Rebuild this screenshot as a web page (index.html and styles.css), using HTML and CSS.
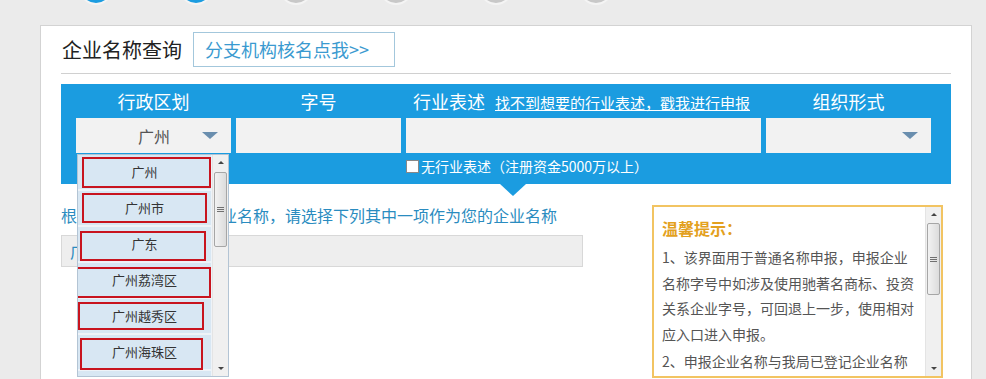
FILE: index.html
```html
<html>
	<head>
		<meta charset="UTF-8" />
		<meta name="viewport" content="width=device-width, initial-scale=1.0" />
		<title>企业名称查询</title>
		<link rel="stylesheet" href="styles.css">
	</head>
	<body>
		<div class="steps">
			<span class="step done"></span>
			<span class="step done"></span>
			<span class="step"></span>
			<span class="step"></span>
			<span class="step"></span>
			<span class="step"></span>
		</div>

		<div class="card">
			<div class="title-row">
				<h2 class="title">企业名称查询</h2>
				<a class="branch-btn">分支机构核名点我&gt;&gt;</a>
			</div>

			<div class="query">
				<div class="query-grid">
					<div class="qh">行政区划</div>
					<div class="qh">字号</div>
					<div class="qh qh-left">行业表述<a class="report-link">找不到想要的行业表述，戳我进行申报</a></div>
					<div class="qh">组织形式</div>

					<div class="field select"><span>广州</span><i class="caret"></i></div>
					<div class="field"></div>
					<div class="field"></div>
					<div class="field select"><span></span><i class="caret"></i></div>

					<div></div>
					<div></div>
					<label class="no-industry"><span class="checkbox"></span>无行业表述（注册资金5000万以上）</label>
					<div></div>
				</div>
				<div class="pointer"></div>

				<div class="dropdown">
					<div class="options">
						<div class="opt">广州</div>
						<div class="opt">广州市</div>
						<div class="opt">广东</div>
						<div class="opt">广州荔湾区</div>
						<div class="opt">广州越秀区</div>
						<div class="opt">广州海珠区</div>
						<div class="opt">广州天河区</div>
					</div>
					<div class="sbar">
						<span class="sbar-btn up"></span>
						<span class="sbar-thumb"><i></i></span>
						<span class="sbar-fill"></span>
						<span class="sbar-btn down"></span>
					</div>
				</div>
			</div>

			<div class="result">
				<div class="result-left">
					<p class="hint">根据您输入生成以下企业名称，请选择下列其中一项作为您的企业名称</p>
					<div class="name-bar">广州有限公司</div>
				</div>
				<div class="tips">
					<div class="tips-body">
						<div class="tips-title">温馨提示：</div>
						<p>1、该界面用于普通名称申报，申报企业名称字号中如涉及使用驰著名商标、投资关系企业字号，可回退上一步，使用相对应入口进入申报。</p>
						<p>2、申报企业名称与我局已登记企业名称相同或近似的，将不予核准。</p>
					</div>
					<div class="sbar sbar-tips">
						<span class="sbar-btn up"></span>
						<span class="sbar-thumb"><i></i></span>
						<span class="sbar-fill"></span>
						<span class="sbar-btn down"></span>
					</div>
				</div>
			</div>
		</div>
	</body>
</html>
```

FILE: styles.css
```css
body {
	margin: 0;
	background-color: #ebebeb;
	font-family: "Noto Sans CJK SC", "Liberation Sans", sans-serif;
	color: #333;
	text-spacing-trim: space-all;
}

/* step circles, mostly scrolled off the top */
.steps {
	box-sizing: border-box;
	height: 25px;
	overflow: hidden;
	display: flex;
	align-items: flex-end;
	gap: 66px;
	padding: 0 0 20px 79px;
}
.step {
	flex: none;
	box-sizing: border-box;
	width: 34px;
	height: 34px;
	border-radius: 50%;
	border: 2px solid #f4f4f4;
	background-color: #c8c8c8;
}
.step.done {
	background-color: #1b9ce0;
}

.card {
	box-sizing: border-box;
	width: 932px;
	height: 400px;
	margin-left: 40px;
	padding: 0 20px;
	background-color: #fff;
	border: 1px solid #d3d3d3;
}

.title-row {
	display: flex;
	align-items: center;
	height: 35px;
	margin-top: 6px;
	padding-bottom: 6px;
	border-bottom: 1px solid #d0d0d0;
}
.title {
	margin: 0 0 0 1px;
	font-size: 20px;
	font-weight: normal;
	line-height: 35px;
	color: #222;
}
.branch-btn {
	box-sizing: border-box;
	width: 202px;
	height: 35px;
	margin-left: 11px;
	padding-left: 11px;
	border: 1px solid #a3c7dc;
	font-size: 18px;
	line-height: 33px;
	color: #3a9ad0;
	cursor: pointer;
}

.query {
	position: relative;
	margin-top: 10px;
	padding: 0 20px 0 15px;
	background-color: #1b9ce0;
}
.query-grid {
	display: grid;
	grid-template-columns: 155px 165px 355px 165px;
	grid-template-rows: 34px 35px 31px;
	column-gap: 5px;
}
.qh {
	font-size: 18px;
	line-height: 34px;
	color: #fff;
	text-align: center;
	white-space: nowrap;
}
.qh-left {
	text-align: left;
	padding-left: 7px;
}
.report-link {
	margin-left: 10px;
	font-size: 15px;
	color: #fff;
	text-decoration: underline;
	cursor: pointer;
}
.field {
	background-color: #f2f2f2;
}
.select {
	display: flex;
	align-items: center;
	padding: 0 13px 0 30px;
}
.select span {
	flex: 1;
	text-align: center;
	font-size: 16px;
	color: #555;
}
.caret {
	width: 0;
	height: 0;
	border-left: 8px solid transparent;
	border-right: 8px solid transparent;
	border-top: 7px solid #6a8eae;
}
.no-industry {
	display: flex;
	align-items: center;
	height: 26px;
	font-size: 14px;
	color: #fff;
	white-space: nowrap;
}
.checkbox {
	box-sizing: border-box;
	width: 13px;
	height: 13px;
	margin-right: 2px;
	background-color: #fff;
	border: 1px solid #888;
}
.pointer {
	position: absolute;
	left: 439px;
	top: 100%;
	width: 0;
	height: 0;
	border-left: 13px solid transparent;
	border-right: 13px solid transparent;
	border-top: 12px solid #1b9ce0;
}

/* open list of the region select */
.dropdown {
	position: absolute;
	left: 16px;
	top: 70px;
	box-sizing: border-box;
	width: 152px;
	height: 223px;
	display: flex;
	gap: 1px;
	overflow: hidden;
	background-color: #eef3f8;
	border: 1px solid #b3c4d4;
}
.options {
	width: 134px;
}
.opt {
	position: relative;
	height: 34px;
	margin-bottom: 2px;
	font-size: 13px;
	line-height: 34px;
	text-align: center;
	color: #333;
	background-color: #d8e7f3;
}
.opt::after {
	content: "";
	position: absolute;
	border: 2px solid #c8141e;
}
.opt:nth-child(1)::after { top: 2px; right: 0; bottom: 1px; left: 4px; }
.opt:nth-child(2)::after { top: 2px; right: 4px; bottom: 2px; left: 4px; }
.opt:nth-child(3)::after { top: 4px; right: 5px; bottom: 0; left: 2px; }
.opt:nth-child(4)::after { top: 4px; right: 0; bottom: -1px; left: -3px; }
.opt:nth-child(5)::after { top: 3px; right: 7px; bottom: 3px; left: 0; }
.opt:nth-child(6)::after { top: 3px; right: 8px; bottom: -1px; left: 2px; }
.opt:nth-child(7)::after { display: none; }

/* classic scrollbar */
.sbar {
	display: flex;
	flex-direction: column;
	width: 15px;
	background-color: #f0f0f0;
	border-left: 1px solid #e4e4e4;
}
.sbar-btn {
	display: flex;
	align-items: center;
	justify-content: center;
	height: 15px;
}
.sbar-btn::before {
	content: "";
	width: 0;
	height: 0;
	border-left: 3px solid transparent;
	border-right: 3px solid transparent;
}
.sbar-btn.up::before {
	border-bottom: 3px solid #444;
}
.sbar-btn.down::before {
	border-top: 3px solid #444;
}
.sbar-thumb {
	display: flex;
	align-items: center;
	justify-content: center;
	box-sizing: border-box;
	height: 75px;
	margin: 2px 1px 0;
	border: 1px solid #a6a6a6;
	border-radius: 2px;
	background: linear-gradient(to right, #f2f2f2, #dcdcdc);
}
.sbar-thumb i {
	width: 7px;
	height: 5px;
	background: repeating-linear-gradient(to bottom, #707070 0, #707070 1px, transparent 1px, transparent 2px);
}
.sbar-fill {
	flex: 1;
}

.result {
	display: flex;
	margin-top: 21px;
}
.result-left {
	width: 522px;
}
.hint {
	margin: 0;
	font-size: 16px;
	line-height: 20px;
	color: #2a8cc0;
	white-space: nowrap;
}
.name-bar {
	box-sizing: border-box;
	height: 32px;
	margin-top: 10px;
	padding-left: 8px;
	font-size: 16px;
	line-height: 30px;
	color: #2a8cc0;
	background-color: #eeeeee;
	border: 1px solid #d8d8d8;
}

.tips {
	box-sizing: border-box;
	display: flex;
	width: 291px;
	height: 173px;
	margin-left: 69px;
	overflow: hidden;
	border: 2px solid #f2c462;
}
.tips-body {
	flex: 1;
	padding: 8px 0 0 8px;
}
.tips-title {
	font-size: 16px;
	font-weight: bold;
	line-height: 26px;
	color: #e3a11e;
}
.tips-body p {
	width: 252px;
	margin: 4px 0 0;
	font-size: 14px;
	line-height: 25.5px;
	color: #555;
}
.tips-body p + p {
	margin-top: 2px;
}
.sbar-tips .sbar-thumb {
	height: 72px;
	margin-top: 1px;
}
```
